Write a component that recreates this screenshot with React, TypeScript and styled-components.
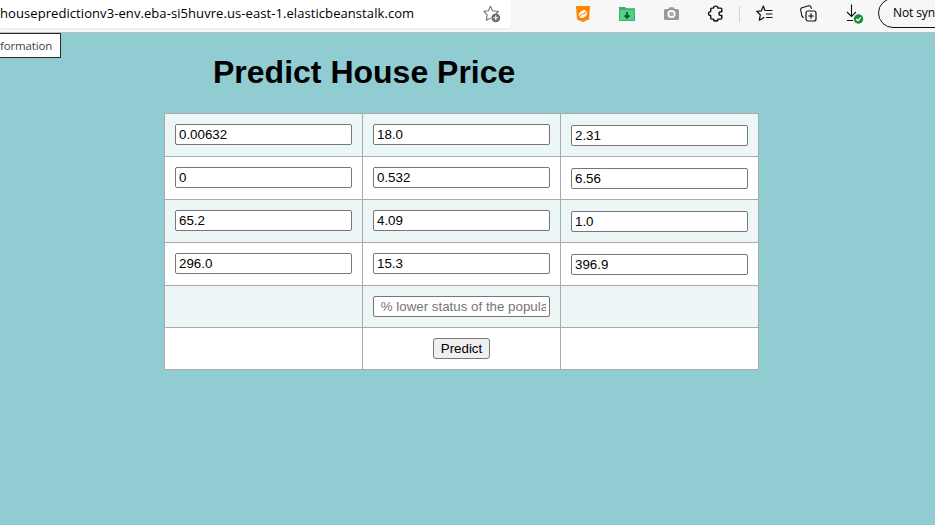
import React from 'react';
import styled, { createGlobalStyle } from 'styled-components';

const GlobalStyle = createGlobalStyle`
  * { box-sizing: border-box; }
  html, body { margin: 0; padding: 0; overflow: hidden; }
`;

const Window = styled.div`
  position: relative;
  width: 935px;
  height: 525px;
  overflow: hidden;
  background: #91ccd3;
  font-family: "Liberation Sans", Arial, sans-serif;
  color: #000;
`;

const Toolbar = styled.header`
  display: flex;
  align-items: flex-start;
  height: 33px;
  overflow: hidden;
  background: #f7f7f7;
  border-bottom: 1px solid #bdbdbd;
  font-family: "Open Sans", "Noto Sans", sans-serif;
`;

const AddressBar = styled.div`
  display: flex;
  flex: none;
  align-items: center;
  justify-content: space-between;
  width: 511px;
  height: 28px;
  padding-right: 10px;
  background: #fff;
  border-radius: 0 0 3px 0;
  box-shadow: 0 1px 2px rgba(0, 0, 0, 0.06);
`;

const Url = styled.span`
  font-size: 13px;
  line-height: 27px;
  margin-top: -1px;
  letter-spacing: 0.075px;
  white-space: nowrap;
`;

const Actions = styled.div`
  display: flex;
  flex: none;
  align-items: center;
  height: 27px;
  margin-left: 65px;
`;

const Slot = styled.span<{ $gap: number }>`
  display: flex;
  flex: none;
  margin-right: ${(p) => p.$gap}px;
`;

const Divider = styled.span`
  flex: none;
  width: 1px;
  height: 16px;
  margin-right: 16px;
  background: #d2d2d2;
`;

const Profile = styled.div`
  flex: none;
  width: 110px;
  height: 30px;
  margin-top: -2px;
  padding-left: 14px;
  border: 1px solid #111;
  border-radius: 15px;
  font-size: 12px;
  line-height: 28px;
  letter-spacing: -0.1px;
  white-space: nowrap;
`;

const Hint = styled.div`
  position: absolute;
  top: 33px;
  left: -1px;
  width: 62px;
  height: 25px;
  border: 1px solid #2b2b2b;
  background: #fff;
  color: #444;
  font-family: "Open Sans", "Noto Sans", sans-serif;
  font-size: 11.5px;
  line-height: 23px;
  letter-spacing: -0.16px;
`;

const Title = styled.h1`
  margin: 21px 0 0 213px;
  font-size: 32px;
  line-height: 37px;
  font-weight: bold;
  white-space: nowrap;
`;

const Table = styled.form`
  display: grid;
  grid-template-columns: repeat(3, 197px);
  grid-template-rows: repeat(4, 42px) repeat(2, 41px);
  gap: 1px;
  width: 595px;
  margin: 22px 0 0 164px;
  padding: 1px;
  background: #aaa;
`;

const Cell = styled.div<{ $tinted: boolean; $drop?: boolean }>`
  display: flex;
  align-items: flex-start;
  justify-content: center;
  padding-top: ${(p) => (p.$drop ? 11 : 10)}px;
  background: ${(p) => (p.$tinted ? '#edf6f7' : '#fff')};
`;

const Field = styled.input`
  width: 177px;
  height: 21px;
  margin: 0;
  padding: 1px 3px;
  border: 1px solid #767676;
  border-radius: 2px;
  outline: none;
  background: #fff;
  color: #000;
  font: 13.333px "Liberation Sans", Arial, sans-serif;
  &::placeholder { color: #757575; opacity: 1; }
`;

const Submit = styled.button`
  width: 57px;
  height: 21px;
  padding: 0;
  border: 1px solid #767676;
  border-radius: 3px;
  background: #efefef;
  color: #000;
  font: 13.333px/19px "Liberation Sans", Arial, sans-serif;
`;

const rows = [
  ['0.00632', '18.0', '2.31'],
  ['0', '0.532', '6.56'],
  ['65.2', '4.09', '1.0'],
  ['296.0', '15.3', '396.9'],
];

const StarAdd = () => (
  <svg width="18" height="18" viewBox="0 0 18 18" fill="none">
    <path d="M7.5 1.2 9.6 5.7 15.5 6.5 13.4 8.4M7.5 1.2 5.4 5.7.9 6.4 4.2 9.8 3.3 15.3 7.4 13.2" stroke="#757575" strokeWidth="1.1" strokeLinejoin="round" strokeLinecap="round" />
    <circle cx="12.8" cy="12.8" r="4.4" fill="#6b6b6b" />
    <path d="M12.8 10.4v4.8M10.4 12.8h4.8" stroke="#fff" strokeWidth="1.1" />
  </svg>
);

const Shield = () => (
  <svg width="14" height="16" viewBox="0 0 14 16">
    <path d="M0 0h14l-1 13.5L7 16l-6-2.500z" fill="#ff8500" />
    <ellipse cx="7" cy="8" rx="4.500" ry="3.300" transform="rotate(-40 7 8)" fill="#fff" />
    <path d="M3.600 10.600Q5 7.900 7 8T10.500 5.300" stroke="#ff8500" strokeWidth="1.100" fill="none" />
  </svg>
);

const FolderDown = () => (
  <svg width="16" height="14" viewBox="0 0 16 14">
    <path d="M0 0h6l1.500 1.300H16V14H0z" fill="#39b36b" />
    <path d="M1 3h14v10H1z" fill="#50d285" />
    <path d="M8 5v5.500M5.600 8.300 8 10.800l2.400-2.500" stroke="#164b32" strokeWidth="1.700" fill="none" />
  </svg>
);

const Camera = () => (
  <svg width="15" height="13" viewBox="0 0 15 13">
    <path d="M1.500 2h2.800L5.400.2h4.200L10.700 2h2.800Q15 2 15 3.500v8Q15 13 13.500 13h-12Q0 13 0 11.500v-8Q0 2 1.500 2z" fill="#999" />
    <circle cx="7.500" cy="7" r="3.200" fill="#aaa" stroke="#fff" strokeWidth="1.700" />
  </svg>
);

const Puzzle = () => (
  <svg width="16" height="17" viewBox="0 0 16 17" fill="none">
    <path d="M6.500 3.100C6.600.4 10.900.4 11 3.100h2.700q1.100 0 1.100 1.100v2.500h-.8c-2.700 0-2.700 3.800 0 3.800h.8V13q0 1.100-1.100 1.100H11c-.1 2.600-4.400 2.600-4.500 0H4.800q-1.100 0-1.100-1.100v-2.400C.8 10.500.8 6.700 3.700 6.600V4.200q0-1.100 1.100-1.100z" stroke="#111" strokeWidth="1.400" strokeLinejoin="round" />
  </svg>
);

const Favorites = () => (
  <svg width="18" height="17" viewBox="0 0 18 17" fill="none" stroke="#111" strokeWidth="1.200">
    <path d="M9.500 5.500H9L7.300 1 5.400 5.800.7 6.300l3.600 3.500-1 5.400 4.600-2.700" strokeLinejoin="round" strokeLinecap="round" />
    <path d="M10 5.500h6.500M10 9h6.500M10 12.500h6.500" />
  </svg>
);

const Collections = () => (
  <svg width="17" height="17" viewBox="0 0 17 17" fill="none" stroke="#111" strokeWidth="1.100">
    <path d="M3.700 12.700Q2.300 12.300 1.900 11L.7 5Q.4 3.200 2 2.700L8.500.8q1.500-.4 2.200 1l.9 2" />
    <rect x="6" y="6" width="10" height="10" rx="2" strokeWidth="1.200" />
    <path d="M11 8.200v5.600M8.200 11h5.600" strokeWidth="1.200" />
  </svg>
);

const Download = () => (
  <svg width="18" height="20" viewBox="0 0 18 20" fill="none">
    <path d="M5.500.5v12M1 8l4.500 4.500L10 8M1 16.500h6" stroke="#111" strokeWidth="1.100" />
    <circle cx="12.500" cy="15" r="4.700" fill="#168a3d" />
    <path d="m10.200 15 1.700 1.700 3-3.300" stroke="#fff" strokeWidth="1.300" />
  </svg>
);

export default function App() {
  return (
    <Window>
      <GlobalStyle />
      <Toolbar>
        <AddressBar>
          <Url>housepredictionv3-env.eba-si5huvre.us-east-1.elasticbeanstalk.com</Url>
          <StarAdd />
        </AddressBar>
        <Actions>
          <Slot $gap={29}><Shield /></Slot>
          <Slot $gap={29}><FolderDown /></Slot>
          <Slot $gap={28}><Camera /></Slot>
          <Slot $gap={16}><Puzzle /></Slot>
          <Divider />
          <Slot $gap={26}><Favorites /></Slot>
          <Slot $gap={29}><Collections /></Slot>
          <Slot $gap={14}><Download /></Slot>
        </Actions>
        <Profile>Not syncing</Profile>
      </Toolbar>
      <Hint>formation</Hint>
      <Title>Predict House Price</Title>
      <Table onSubmit={(e) => e.preventDefault()}>
        {rows.map((row, r) =>
          row.map((value, c) => (
            <Cell key={`${r}-${c}`} $tinted={r % 2 === 0} $drop={c === 2}>
              <Field defaultValue={value} />
            </Cell>
          )),
        )}
        <Cell $tinted />
        <Cell $tinted><Field placeholder=" % lower status of the population" /></Cell>
        <Cell $tinted />
        <Cell $tinted={false} />
        <Cell $tinted={false}><Submit>Predict</Submit></Cell>
        <Cell $tinted={false} />
      </Table>
    </Window>
  );
}
